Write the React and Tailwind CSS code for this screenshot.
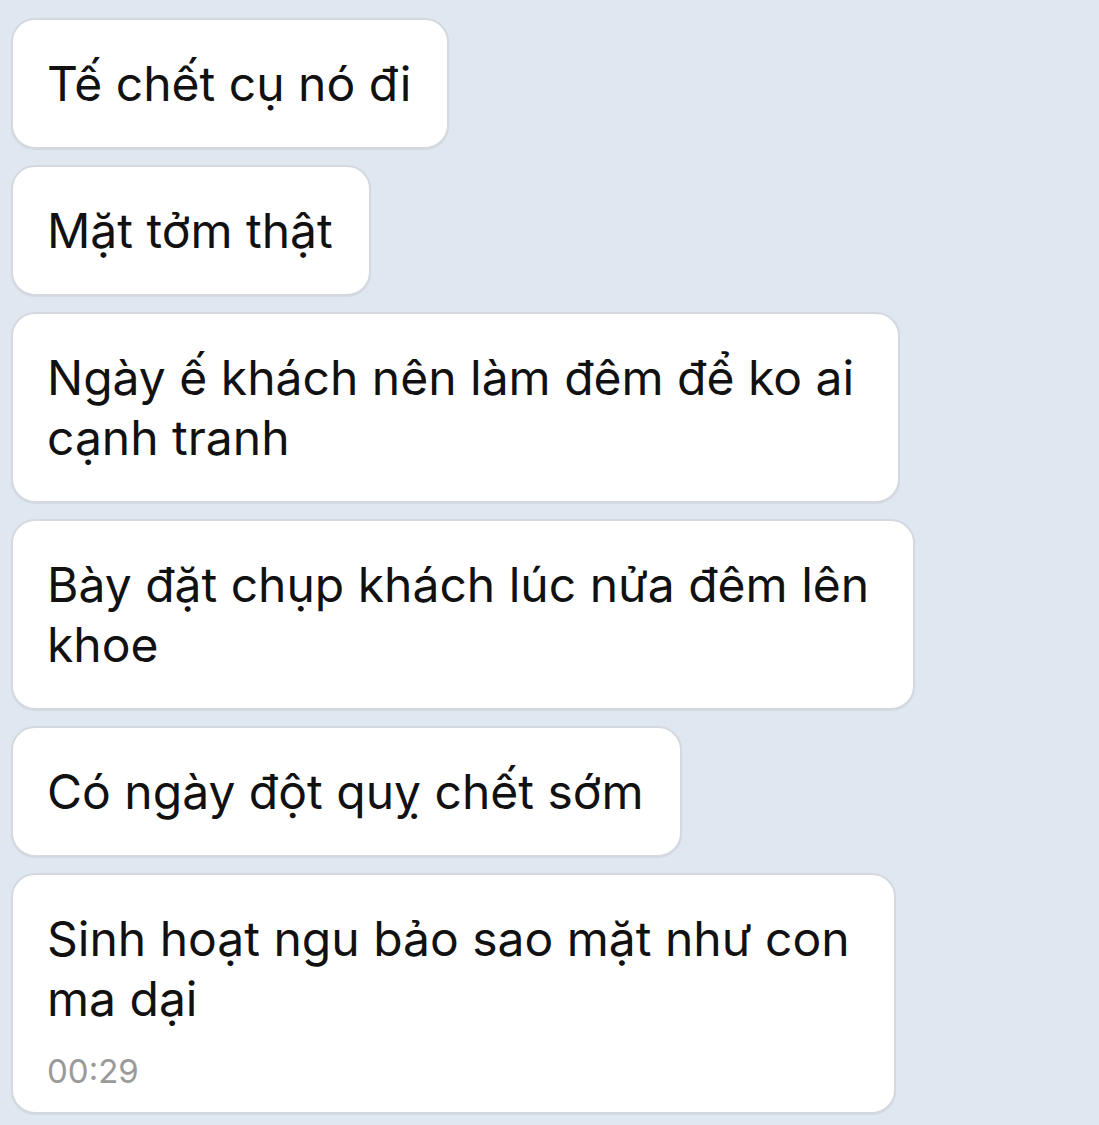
const messages = [
  { lines: ['Tế chết cụ nó đi'] },
  { lines: ['Mặt tởm thật'] },
  { lines: ['Ngày ế khách nên làm đêm để ko ai', 'cạnh tranh'], wide: true },
  { lines: ['Bày đặt chụp khách lúc nửa đêm lên', 'khoe'], wide: true },
  { lines: ['Có ngày đột quỵ chết sớm'] },
  { lines: ['Sinh hoạt ngu bảo sao mặt như con', 'ma dại'], wide: true, time: '00:29' },
];

const Bubble = ({ lines, wide, time }) => (
  <div
    className={`w-fit rounded-[24px] border-2 border-[#d5d9df] bg-white pl-[34px] shadow-[0_1px_1px_rgba(0,0,0,0.06)] ${wide ? 'pr-[44px]' : 'pr-[36px]'} ${time ? 'pt-[34px] pb-[21px]' : 'pt-[34px] pb-[33px]'}`}
  >
    <p className="text-[48px] leading-[60px] text-[#111]">
      {lines.map((l, i) => (
        <span key={i} className="block whitespace-nowrap">{l}</span>
      ))}
    </p>
    {time && <p className="mt-[22px] text-[33px] leading-[40px] text-[#9a9a9a]">{time}</p>}
  </div>
);

export default function App() {
  return (
    <div
      className="min-h-[1125px] bg-[#dfe7f1] pl-[11px] pt-[18px] flex flex-col gap-[16px]"
      style={{ fontFamily: 'Inter, "Noto Sans", sans-serif' }}
    >
      {messages.map((m, i) => (
        <Bubble key={i} {...m} />
      ))}
    </div>
  );
}
